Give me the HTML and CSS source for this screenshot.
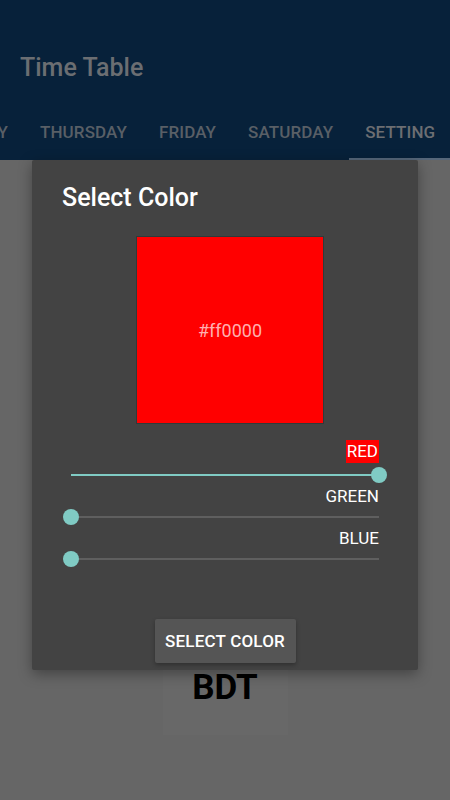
FILE: index.html
```html
<!DOCTYPE html>
<html>
<head>
<meta charset="utf-8">
<link rel="stylesheet" href="styles.css">
</head>
<body>
<div class="screen">
  <header class="appbar">
    <div class="title">Time Table</div>
    <nav class="tabs">
      <div class="tab partial"><span class="partial-text">Wednesday</span></div>
      <div class="tab">Thursday</div>
      <div class="tab">Friday</div>
      <div class="tab">Saturday</div>
      <div class="tab active">Setting</div>
    </nav>
  </header>
  <main class="content">
    <div class="bdt">BDT</div>
  </main>

  <div class="dialog">
    <h2 class="dialog-title">Select Color</h2>
    <div class="swatch">#ff0000</div>
    <div class="sliders">
      <div class="label"><span class="red-label">RED</span></div>
      <div class="slider"><div class="track"><div class="fill"></div></div><div class="thumb thumb-end"></div></div>
      <div class="label">GREEN</div>
      <div class="slider"><div class="track"></div><div class="thumb thumb-start"></div></div>
      <div class="label">BLUE</div>
      <div class="slider"><div class="track"></div><div class="thumb thumb-start"></div></div>
    </div>
    <div class="actions">
      <button class="btn">SELECT COLOR</button>
    </div>
  </div>
</div>
</body>
</html>
```

FILE: styles.css
```css
* { box-sizing: border-box; }
html, body { margin: 0; padding: 0; }
body {
  width: 450px;
  height: 800px;
  overflow: hidden;
  font-family: Roboto, "Noto Sans", sans-serif;
  background: #666666;
}
.screen {
  position: relative;
  width: 450px;
  height: 800px;
  display: flex;
  flex-direction: column;
  overflow: hidden;
}
.appbar {
  background: #07213a;
  height: 160px;
  display: flex;
  flex-direction: column;
}
.title {
  color: #6b6e72;
  font-size: 25px;
  font-weight: 500;
  padding: 53px 0 0 20px;
  line-height: 30px;
  height: 112px;
}
.tabs {
  display: flex;
  height: 48px;
  white-space: nowrap;
  overflow: hidden;
}
.tab {
  flex: 0 0 auto;
  padding: 0 16px;
  line-height: 40px;
  height: 48px;
  font-size: 17px;
  letter-spacing: 0.1px;
  font-weight: 500;
  text-transform: uppercase;
  color: #595f66;
  border-bottom: 2px solid transparent;
}
.tab.partial {
  flex: 0 0 24px;
  width: 24px;
  min-width: 0;
  padding: 0 16px 0 0;
  display: flex;
  justify-content: flex-end;
}
.partial-text {
  flex: 0 0 auto;
}
.tab.active {
  color: #6c6e72;
  border-bottom-color: #56677a;
  flex: 1 1 auto;
  min-width: 0;
}
.content {
  flex: 1;
  display: flex;
  justify-content: center;
  padding-top: 510px;
}
.bdt {
  width: 125px;
  height: 65px;
  background: #686868;
  text-align: center;
  font-size: 35px;
  font-weight: 700;
  color: #000;
  line-height: 36px;
}
.dialog {
  position: absolute;
  left: 32px;
  top: 160px;
  width: 386px;
  height: 510px;
  background: #434343;
  box-shadow: 0 4px 14px rgba(0,0,0,0.35);
  border-radius: 2px;
  padding-top: 23px;
  display: flex;
  flex-direction: column;
}
.dialog-title {
  margin: 0 0 0 30px;
  color: #fff;
  font-size: 25px;
  font-weight: 500;
  line-height: 30px;
  height: 30px;
}
.swatch {
  align-self: flex-start;
  margin: 23px 0 0 104px;
  width: 188px;
  height: 188px;
  background: #ff0000;
  border: 1px solid #2f3a3a;
  display: flex;
  align-items: center;
  justify-content: center;
  color: #ffb0b0;
  font-size: 18px;
}
.sliders {
  margin: 16px 39px 0 39px;
  display: flex;
  flex-direction: column;
}
.label {
  text-align: right;
  color: #fff;
  font-size: 17px;
  line-height: 18px;
  height: 18px;
}
.label:first-child {
  height: 23px;
  line-height: 23px;
}
.red-label {
  display: inline-block;
  background: #ff0000;
  padding: 0 1px;
}
.slider {
  position: relative;
  height: 24px;
  display: flex;
  align-items: center;
}
.track {
  flex: 1;
  height: 2px;
  background: #5f5f5f;
  display: flex;
}
.fill {
  flex: 1;
  background: #80cbc4;
}
.thumb {
  position: absolute;
  top: 4px;
  width: 16px;
  height: 16px;
  border-radius: 50%;
  background: #80cbc4;
}
.thumb-end { right: -8px; }
.thumb-start { left: -8px; }
.actions {
  margin-top: 48px;
  display: flex;
  justify-content: center;
}
.btn {
  width: 141px;
  height: 44px;
  border: none;
  border-radius: 2px;
  background: #555555;
  color: #fff;
  font-family: Roboto, sans-serif;
  font-size: 17px;
  letter-spacing: 0.2px;
  font-weight: 500;
  box-shadow: 0 2px 4px rgba(0,0,0,0.3);
  padding: 0;
}
```
